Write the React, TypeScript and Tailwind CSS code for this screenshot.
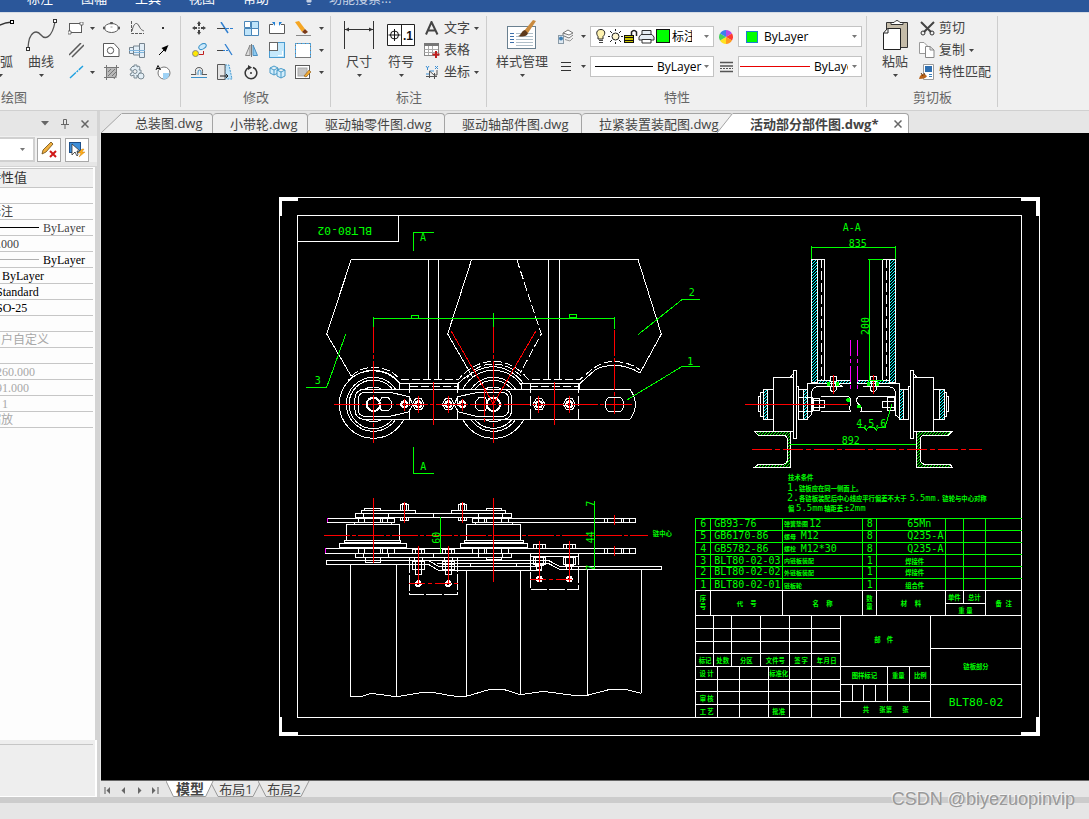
import type { ReactNode } from "react";
import clsx from "clsx";

const menus = [
  { label: "标注", cls: "ml-[27px]" },
  { label: "图幅", cls: "ml-7" },
  { label: "工具", cls: "ml-7" },
  { label: "视图", cls: "ml-7" },
  { label: "帮助", cls: "ml-7" },
];

const docTabs = ["小带轮.dwg", "驱动轴零件图.dwg", "驱动轴部件图.dwg", "拉紧装置装配图.dwg"];

const bom = [
  { no: "6", code: "GB93-76", name: "弹簧垫圈", spec: "12", sx: 358, qty: "8", mat: "65Mn", y: 80 },
  { no: "5", code: "GB6170-86", name: "螺母", spec: "M12", sx: 332, qty: "8", mat: "Q235-A", y: 118 },
  { no: "4", code: "GB5782-86", name: "螺栓", spec: "M12*30", sx: 332, qty: "8", mat: "Q235-A", y: 155 },
  { no: "3", code: "BLT80-02-03", name: "内链板装配", spec: "", sx: 0, qty: "1", mat: "", cn: "焊接件", y: 191 },
  { no: "2", code: "BLT80-02-02", name: "外链板装配", spec: "", sx: 0, qty: "1", mat: "", cn: "焊接件", y: 226 },
  { no: "1", code: "BLT80-02-01", name: "链板轮", spec: "", sx: 0, qty: "1", mat: "", cn: "组合件", y: 265 },
];

const labels: [number, number, string][] = [
  [39, 304, "序"], [39, 326, "号"], [150, 318, "代"], [190, 318, "号"], [377, 318, "名"], [418, 318, "称"],
  [538, 304, "数"], [538, 326, "量"], [642, 318, "材"], [684, 318, "料"], [793, 299, "单件"], [853, 299, "总计"],
  [814, 338, "重"], [838, 338, "量"], [926, 318, "备"], [956, 318, "注"], [562, 427, "部"], [600, 427, "件"],
  [45, 489, "标记"], [98, 489, "处数"], [169, 489, "分区"], [256, 489, "文件号"], [322, 489, "签"], [344, 489, "字"],
  [390, 489, "年"], [410, 489, "月"], [430, 489, "日"], [38, 527, "设"], [61, 527, "计"], [266, 527, "标准化"],
  [39, 602, "审"], [61, 602, "核"], [39, 641, "工"], [61, 641, "艺"], [266, 641, "批准"], [523, 534, "图样标记"],
  [625, 534, "重量"], [691, 534, "比例"], [528, 636, "共"], [587, 636, "张第"], [646, 636, "张"], [858, 506, "链板部分"],
];

function Icon({ w, h, children }: { w: number; h: number; children: ReactNode }) {
  return (
    <svg width={w} height={h} viewBox={`0 0 ${w} ${h}`} fill="none" stroke="#5a5a5a" className="shrink-0" aria-hidden="true">
      {children}
    </svg>
  );
}

function Caret({ faint }: { faint?: boolean }) {
  return (
    <svg width="5" height="3" viewBox="0 0 5 3" className="shrink-0" aria-hidden="true">
      <path d="M0 0H5L2.5 3Z" fill={faint ? "#777" : "#444"} />
    </svg>
  );
}

function Tool({ label, children }: { label: string; children: ReactNode }) {
  return (
    <button aria-label={label} className="flex h-[22px] w-full items-center justify-center">
      {children}
    </button>
  );
}

function BigTool({ label, w, children }: { label: string; w: string; children: ReactNode }) {
  return (
    <button className={clsx("flex shrink-0 flex-col items-center", w)}>
      <span className="flex h-[35px] items-center">{children}</span>
      <span className="h-[18px] whitespace-nowrap text-[13px] leading-[18px]">{label}</span>
      <span className="mt-1 flex">
        <Caret />
      </span>
    </button>
  );
}

function Row({ label, caret, children }: { label: string; caret?: boolean; children: ReactNode }) {
  return (
    <button className="flex h-[22px] items-center">
      <span className="mr-1 flex w-4 justify-center">{children}</span>
      <span className="mr-1 whitespace-nowrap text-[13px]">{label}</span>
      {caret && <Caret />}
    </button>
  );
}

function Group({ title, w, end, children }: { title: string; w: string; end?: boolean; children: ReactNode }) {
  return (
    <section className={clsx("flex shrink-0 flex-col overflow-hidden pt-1", w)}>
      <div className={clsx("flex h-[72px] items-start", end && "justify-end")}>{children}</div>
      <h2 className={clsx("text-[13px] leading-4 text-[#666]", end ? "pl-px" : "text-center")}>{title}</h2>
    </section>
  );
}

function DrawGroup() {
  return (
    <Group title="绘图" w="w-[181px]" end>
      <BigTool label="圆弧" w="w-8">
        <Icon w={32} h={32}>
          <path d="M2 30Q6 4 28 3" stroke="#333" strokeWidth="1.3" />
          <rect x="26.5" y="1.5" width="3" height="3" fill="#fff" stroke="#000" />
        </Icon>
      </BigTool>
      <BigTool label="曲线" w="w-[50px]">
        <Icon w={34} h={34}>
          <path d="M4 30C5 12 13 12 17 17S28 20 31 4" stroke="#555" strokeWidth="1.3" />
          <rect x="2.5" y="29.5" width="3" height="3" fill="#fff" stroke="#333" />
          <rect x="29.5" y="1.5" width="3" height="3" fill="#fff" stroke="#333" />
        </Icon>
      </BigTool>
      <div className="grid shrink-0 grid-cols-[20px_12px_26px_26px_26px] content-start pr-[5px]">
        <Tool label="矩形">
          <Icon w={16} h={13}>
            <rect x="1.5" y="1.5" width="12" height="9" fill="#fff" />
            <path d="M0 9h3v3H0ZM12 0h3v3h-3Z" fill="#fff" strokeWidth=".8" />
          </Icon>
        </Tool>
        <Tool label="矩形选项"><Caret /></Tool>
        <Tool label="椭圆">
          <Icon w={17} h={12}>
            <ellipse cx="8.5" cy="6" rx="7" ry="4.5" fill="#fff" />
            <path d="M0 5h2v2H0ZM15 5h2v2h-2ZM7.5 0h2v2h-2ZM7.5 5h2" fill="#555" strokeWidth=".6" />
          </Icon>
        </Tool>
        <Tool label="公式曲线">
          <Icon w={15} h={14}>
            <path d="M1.5 0V12.5H14" strokeDasharray="3 1" />
            <path d="M2 10C4 1 7 1 9 5S12 9 14 10" />
          </Icon>
        </Tool>
        <Tool label="点">
          <Icon w={4} h={4}><rect x="1" y="1" width="2" height="2" fill="#333" stroke="none" /></Icon>
        </Tool>
        <Tool label="双线">
          <Icon w={15} h={15}><path d="M0 12 12 0M3 14 15 2" strokeWidth="1.5" /></Icon>
        </Tool>
        <span />
        <Tool label="孔轴轮廓">
          <Icon w={17} h={14}>
            <path d="M.5 13.5V.5H11L16 6v7.5Z" fill="#fff" />
            <circle cx="7.5" cy="7.5" r="3.2" />
          </Icon>
        </Tool>
        <Tool label="轴">
          <Icon w={16} h={15}>
            <path d="M.5 4.5h4v6h-4ZM4.500 3h6v9h-6ZM10.500.5h5v14h-5Z" fill="#e2eef7" stroke="#75838e" />
            <path d="M0 7.500H16M5 9.500H15" stroke="#7fb4dc" />
          </Icon>
        </Tool>
        <Tool label="箭头">
          <Icon w={11} h={11}>
            <path d="M1 10 7 4" stroke="#000" />
            <path d="M10.5 0 3.5 3 7.5 7Z" fill="#000" stroke="none" />
          </Icon>
        </Tool>
        <Tool label="中心线">
          <Icon w={15} h={14}><path d="M1 13 14 1" stroke="#1ea0e0" strokeDasharray="8 1 2 1" strokeWidth="1.4" /></Icon>
        </Tool>
        <Tool label="中心线选项"><Caret /></Tool>
        <Tool label="剖面线">
          <Icon w={15} h={15}>
            <path d="M2 2h11v11H2Z" fill="#b8b8b8" stroke="none" />
            <path d="M0 2.5H15M0 12.5H11M2.5 0V15M12.5 0V10L10 14M4 11 11 4M4 7 7 4M8 11 12 7" stroke="#777" />
          </Icon>
        </Tool>
        <Tool label="齿形">
          <Icon w={16} h={16}>
            <path d="M2 4 4 2 5 3V1H8V3L10 2 11 4 10 6H12V9H10L11 11 9 13 8 11V14H5V11L2 12 1 10 3 9V6H1Z" fill="#e3eef5" stroke="#7b8a94" />
            <circle cx="6" cy="7.5" r="2" fill="#f0f0f0" stroke="#7b8a94" />
            <circle cx="12" cy="12" r="3" fill="#e3eef5" stroke="#7b8a94" />
          </Icon>
        </Tool>
        <Tool label="局部放大">
          <Icon w={16} h={15}>
            <circle cx="9" cy="8" r="6" fill="#fff" stroke="#777" />
            <path d="M8 8h6a5 5 0 0 1-6 6Z" fill="#9fd2f5" stroke="none" />
            <path d="M1 5 3 .5 5.5 5M2 3.5H5" stroke="#111" />
          </Icon>
        </Tool>
      </div>
    </Group>
  );
}

function ModifyGroup() {
  return (
    <Group title="修改" w="w-[150px]">
      <div className="grid grid-cols-[26px_26px_26px_26px_26px_10px] content-start pl-[5px]">
        <Tool label="移动">
          <Icon w={14} h={14}>
            <path d="M7 0 9 3H8V5H6V3H5ZM7 14 5 11H6V9H8V11H9ZM0 7 3 5V6H5V8H3V9ZM14 7 11 9V8H9V6H11V5Z" fill="#444" stroke="none" />
            <rect x="6" y="6" width="2" height="2" fill="#888" stroke="none" />
          </Icon>
        </Tool>
        <Tool label="裁剪">
          <Icon w={16} h={12}>
            <path d="M4 0 11 11" stroke="#2f7fd0" strokeWidth="1.5" />
            <path d="M0 6.5H8" stroke="#444" />
            <path d="M9 6.5H16" stroke="#2f7fd0" strokeDasharray="3 1" />
          </Icon>
        </Tool>
        <Tool label="阵列">
          <Icon w={15} h={15}>
            <path d="M.5.5h6v6h-6ZM7.500 7.500h7v7h-7Z" fill="#fff" stroke="#4a86b8" />
            <path d="M7.500.5h7v7h-7ZM.5 7.500h7v7h-7Z" fill="#bfe4fa" stroke="#4a86b8" />
          </Icon>
        </Tool>
        <Tool label="打断">
          <Icon w={16} h={13}>
            <path d="M4 2.5H.5v9h15v-9H12" fill="#fff" />
            <path d="M3 0h3v4ZM10 4V0h3Z" fill="#1f7fd6" stroke="none" />
          </Icon>
        </Tool>
        <Tool label="删除">
          <Icon w={16} h={15}>
            <path d="M0 1 4 0 10 8 7 11Z" fill="#f5a623" stroke="none" />
            <path d="M7 11 10 8 13 11 10 13Z" fill="#7a3a1a" stroke="none" />
            <path d="M1 14.5H16" stroke="#888" />
          </Icon>
        </Tool>
        <Tool label="删除选项"><Caret /></Tool>
        <Tool label="平移复制">
          <Icon w={15} h={15}>
            <ellipse cx="10.5" cy="3.5" rx="4" ry="2.5" fill="#cdeafb" stroke="#3d93c9" transform="rotate(-30 10.5 3.5)" />
            <circle cx="3.5" cy="10.5" r="3" fill="#ffe800" stroke="#888" />
            <path d="M7 11.5H11.5V8" stroke="#c02020" />
          </Icon>
        </Tool>
        <Tool label="延伸">
          <Icon w={16} h={12}>
            <path d="M8 0 15 11" stroke="#2f7fd0" strokeWidth="1.3" />
            <path d="M0 6.5H6" stroke="#444" />
            <path d="M6 6.5H11" stroke="#2f7fd0" strokeDasharray="2 1" />
          </Icon>
        </Tool>
        <Tool label="镜像">
          <Icon w={13} h={13}>
            <path d="M5 1V11.5H.5Z" fill="#ddd" stroke="#888" />
            <path d="M8 1V11.5H12.5Z" fill="#8fcaf0" stroke="#4a8fc0" />
            <path d="M6.5 0V13" stroke="#777" />
          </Icon>
        </Tool>
        <Tool label="缩放">
          <Icon w={16} h={16}>
            <rect x=".5" y=".5" width="15" height="15" fill="#c5e8fb" stroke="#4a9bd0" />
            <rect x=".5" y=".5" width="8" height="8" fill="#fff" stroke="#666" />
            <path d="M9 13.5H13.5V9" stroke="#fff" />
          </Icon>
        </Tool>
        <Tool label="拉伸">
          <Icon w={16} h={15}>
            <rect x=".5" y=".5" width="15" height="14" fill="#fff" stroke="#777" />
            <path d="M.5 14V.5H15.500V14" stroke="#55a8e0" strokeDasharray="3 1" />
          </Icon>
        </Tool>
        <Tool label="拉伸选项"><Caret /></Tool>
        <Tool label="等距线">
          <Icon w={16} h={13}>
            <path d="M0 8.5H5Q3 1.5 8 1.5T11 8.5H16" />
            <path d="M0 11.5H16M7 9V6Q7 4 8.5 4T10 6V9" stroke="#3c8fc8" />
          </Icon>
        </Tool>
        <Tool label="旋转拉伸">
          <Icon w={16} h={16}>
            <path d="M8 1H12L15 15H8Z" fill="#bfe4fa" stroke="#4a9bd0" strokeDasharray="2 1" />
            <path d="M.5.5H8V15.5H.5Z" fill="#e4e4e4" />
            <path d="M3 12H11M9 10 11 12 9 14" stroke="#222" />
          </Icon>
        </Tool>
        <Tool label="旋转">
          <Icon w={14} h={15}>
            <path d="M5 2.5A5.8 5.8 0 1 0 9 2.5" stroke="#333" strokeWidth="1.5" />
            <path d="M4 0 8 2.5 4 5Z" fill="#333" stroke="none" />
            <circle cx="7" cy="8" r="1" fill="#333" stroke="none" />
          </Icon>
        </Tool>
        <Tool label="分解">
          <Icon w={17} h={14}>
            <path d="M1 3 5 1 9 3V8L5 10 1 8ZM1 3 5 5 9 3M5 5V10" fill="#d4eefc" stroke="#4a9bc8" />
            <path d="M8 5 12 3.5 16 5V11L12 13 8 11ZM8 5 12 7 16 5M12 7V13" fill="#d4eefc" stroke="#4a9bc8" />
          </Icon>
        </Tool>
        <Tool label="填充编辑">
          <Icon w={16} h={15}>
            <rect x=".5" y=".5" width="14" height="13" fill="#fff" />
            <rect x="3" y="3" width="9" height="8" fill="#c4c4c4" stroke="#aaa" />
            <path d="M9 11 14 5 16 7 11 12Z" fill="#f0a830" stroke="#8a5a1a" strokeWidth=".6" />
          </Icon>
        </Tool>
        <Tool label="填充编辑选项"><Caret /></Tool>
      </div>
    </Group>
  );
}

function AnnotateGroup() {
  return (
    <Group title="标注" w="w-[156px]">
      <BigTool label="尺寸" w="w-12 ml-1">
        <Icon w={30} h={30}>
          <path d="M.5 1V29M29.5 1V29M1 9.5H29" stroke="#333" />
          <path d="M1 9.5 5 7.5V11.5ZM29 9.5 25 7.5V11.5Z" fill="#333" stroke="none" />
        </Icon>
      </BigTool>
      <BigTool label="符号" w="w-9">
        <Icon w={28} h={24}>
          <path d="M.5 1.5H27.5V22.5H.5ZM14.5 1.5V22.5" fill="#fff" stroke="#222" />
          <circle cx="7.5" cy="12" r="4" stroke="#111" />
          <path d="M1.5 12H13.5M7.5 6V18" stroke="#111" />
          <text x="16" y="17" fontSize="12" fontWeight="bold" fill="#111" stroke="none" fontFamily="Liberation Sans, sans-serif">.1</text>
        </Icon>
      </BigTool>
      <div className="ml-1 flex flex-col pl-px">
        <Row label="文字" caret>
          <Icon w={14} h={14}><path d="M1 13.5 6.5 1 12.5 13.5M3 9.5H11" stroke="#444" strokeWidth="2" /></Icon>
        </Row>
        <Row label="表格">
          <Icon w={16} h={16}>
            <rect x=".5" y="1.5" width="14" height="12" fill="#fff" stroke="#888" />
            <path d="M0 1H15V4H0Z" fill="#777" stroke="none" />
            <path d="M.5 7.5H14M.5 10.5H14M4.5 4V13M8.5 4V13" stroke="#aaa" />
            <path d="M12 9V16M8.5 12.5H15.5" stroke="#c02020" strokeWidth="2" />
          </Icon>
        </Row>
        <Row label="坐标" caret>
          <Icon w={14} h={14}>
            <path d="M1 1 2.5 3 4 1M2.5 3V5M10 1 13 4M13 1 10 4M5 6H9M1 9H5" stroke="#3b8fd4" />
            <path d="M4.5 13V6L9 10H12V5M1 11.5H12M9.5 8V14" stroke="#555" />
          </Icon>
        </Row>
      </div>
    </Group>
  );
}

const comboBox = "flex h-[21px] min-w-0 items-center border border-[#c3c3c3] bg-white text-[12px] text-black";
const comboSelect = "h-full min-w-0 appearance-none overflow-hidden bg-transparent outline-none";

function PropertyGroup() {
  return (
    <Group title="特性" w="w-[380px]">
      <BigTool label="样式管理" w="w-[66px] ml-[2px]">
        <Icon w={32} h={32}>
          <rect x="1.5" y="7.5" width="28" height="22" fill="#fff" stroke="#6a8090" />
          <path d="M4 14.5H8M4 17.5H8M4 20.5H8M4 23.5H8" stroke="#3c6ea8" />
          <path d="M10 14.5H27M10 17.5H27M10 20.5H27M10 23.5H27M10 26.5H27" stroke="#b0bfc9" />
          <path d="M18 12 27 1 30 2 22 14Z" fill="#c98a3e" stroke="none" />
          <path d="M12 17C15 17 15 12 19 11L22 14C21 18 16 18 12 17Z" fill="#5e3a1c" stroke="none" />
        </Icon>
      </BigTool>
      <div className="grid grid-cols-[22px_13px_124px_24px_124px] content-start items-center gap-y-[9px] pt-[9px]">
        <button aria-label="图层" className="flex justify-center">
          <Icon w={16} h={15}>
            <path d="M5 4 10 1 15 4 11 6ZM5 7V4M6 7 11 9 15 6" fill="#fff" stroke="#777" />
            <rect x=".5" y="6.5" width="5" height="8" fill="#dfe9f2" stroke="#8a9aa6" />
            <circle cx="3" cy="9.5" r="2" fill="#3d7fb4" stroke="none" />
            <path d="M7 10.500 12 12 15 9" stroke="#999" />
          </Icon>
        </button>
        <button aria-label="图层选项" className="flex justify-center"><Caret /></button>
        <div className={clsx(comboBox, "pl-1 pr-1")}>
          <Icon w={12} h={17}>
            <path d="M6 1.5C1 1.5 1 6 3 8.5V11H8V8.5C11 6 10 1.5 6 1.5Z" fill="#fff3b0" stroke="#222" />
            <path d="M4 12.5H8M4 14.5H8" stroke="#444" />
          </Icon>
          <Icon w={17} h={17}>
            <circle cx="8.5" cy="8.5" r="3.5" fill="#fff7d0" stroke="#222" />
            <path d="M8.5 1V3M8.5 14V16M1 8.5H3M14 8.5H16M3 3 5 5M12 12 14 14M3 14 5 12M12 5 14 3" stroke="#222" />
          </Icon>
          <Icon w={14} h={15}>
            <path d="M7.5 7V3Q10 0 12.500 3V7" stroke="#222" strokeWidth="1.5" />
            <rect x=".5" y="6.5" width="9" height="7" fill="#c9c400" stroke="#111" />
            <path d="M1 8.5H9M1 11.5H9" stroke="#111" />
          </Icon>
          <Icon w={17} h={15}>
            <path d="M4 5V1.5H13V5M3 5.5H14L16 8V11H1V8Z" fill="#e6ecf2" stroke="#333" />
            <path d="M4 10.5H13V14H4Z" fill="#fff" stroke="#333" />
          </Icon>
          <Icon w={17} h={15}><rect x="1.5" y=".5" width="13" height="13" fill="#0f0" stroke="#111" /></Icon>
          <select aria-label="当前图层" className={clsx(comboSelect, "w-5")}><option>标注</option></select>
          <span className="ml-auto flex"><Caret faint /></span>
        </div>
        <button aria-label="颜色" className="flex justify-center">
          <Icon w={14} h={14}>
            <g stroke="none">
              <path d="M7 7V0A7 7 0 0 1 13 3.5Z" fill="#b44be8" />
              <path d="M7 7 13 3.5A7 7 0 0 1 13 10.5Z" fill="#ff3b30" />
              <path d="M7 7 13 10.5A7 7 0 0 1 7 14Z" fill="#ff9a1f" />
              <path d="M7 7V14A7 7 0 0 1 1 10.5Z" fill="#ffe21f" />
              <path d="M7 7 1 10.5A7 7 0 0 1 1 3.5Z" fill="#45d15a" />
              <path d="M7 7 1 3.5A7 7 0 0 1 7 0Z" fill="#3a7ff0" />
            </g>
          </Icon>
        </button>
        <div className={clsx(comboBox, "pl-[7px] pr-1")}>
          <span className="mr-[6px] h-3 w-3 shrink-0 border border-[#1e7fd0] bg-[#00ff00]" />
          <select aria-label="当前颜色" className={clsx(comboSelect, "flex-1")}><option>ByLayer</option></select>
          <Caret faint />
        </div>
        <button aria-label="线型" className="flex justify-center">
          <Icon w={10} h={9}><path d="M0 .5H10M0 4.5H10M0 8.5H10" stroke="#333" /></Icon>
        </button>
        <button aria-label="线型选项" className="flex justify-center"><Caret /></button>
        <div className={clsx(comboBox, "pl-1 pr-1")}>
          <span className="mr-1 h-px min-w-0 flex-1 bg-black" />
          <select aria-label="当前线型" className={clsx(comboSelect, "w-[47px]")}><option>ByLayer</option></select>
          <Caret faint />
        </div>
        <button aria-label="线宽" className="flex justify-center">
          <Icon w={13} h={12}><path d="M0 1.5H13M0 5H13M0 10.5H13" stroke="#555" strokeWidth="1.5" /><path d="M0 7.5H13" stroke="#555" strokeDasharray="2 1" /></Icon>
        </button>
        <div className={clsx(comboBox, "pl-px pr-1")}>
          <span className="mr-1 h-px w-[70px] shrink-0 bg-[#e80000]" />
          <select aria-label="当前线宽" className={clsx(comboSelect, "w-[34px]")}><option>ByLayer</option></select>
          <span className="ml-auto flex"><Caret faint /></span>
        </div>
      </div>
    </Group>
  );
}

function ClipboardGroup() {
  return (
    <Group title="剪切板" w="w-[131px]">
      <BigTool label="粘贴" w="w-11 ml-[6px]">
        <Icon w={27} h={32}>
          <path d="M4.5 3.5H25.5V28.5H4.5Z" fill="#c4bba8" stroke="#333" />
          <path d="M9 5.5V3.5H12Q15-.5 18 3.5H21V5.5Z" fill="#fff" stroke="#333" />
          <path d="M5.5 9.5H18.5V30.5H1.5V14Z" fill="#fff" stroke="#222" />
          <path d="M1.5 14H6V9.5" stroke="#222" />
        </Icon>
      </BigTool>
      <div className="ml-[2px] flex flex-col">
        <Row label="剪切">
          <Icon w={15} h={15}>
            <path d="M1 1 11 11M14 1 4 11" stroke="#444" strokeWidth="2" />
            <circle cx="3" cy="12" r="2" stroke="#333" /><circle cx="12" cy="12" r="2" stroke="#333" />
          </Icon>
        </Row>
        <Row label="复制" caret>
          <Icon w={16} h={16}>
            <path d="M.5.5H5L8.5 4V11.5H.5Z" fill="#fff" stroke="#999" />
            <path d="M6.5 4.5H11L15 8V15.5H6.5ZM11 4.5V8H15" fill="#fff" stroke="#888" />
          </Icon>
        </Row>
        <Row label="特性匹配">
          <Icon w={16} h={16}>
            <path d="M4.5.5H14.5V15.5H4.5Z" fill="#fff" stroke="#999" />
            <rect x="6" y="2" width="7" height="6" fill="#2f6fb0" stroke="none" />
            <path d="M10 10.5H13M10 12.5H13" stroke="#3c7fb8" />
            <path d="M0 15Q1 10 5 10L8 12Q7 15 0 15Z" fill="#b8621a" stroke="none" />
            <path d="M2 9 4 12M5 9 6 11" stroke="#6b3a10" />
          </Icon>
        </Row>
      </div>
    </Group>
  );
}

function Ribbon() {
  const bar = <div className="-ml-px my-[3px] w-px shrink-0 bg-[#cdcdcd]" />;
  return (
    <div className="flex h-[98px] overflow-hidden border-b border-[#d0d0d0] bg-[#f0f0f0] text-[#444]">
      <DrawGroup />{bar}
      <ModifyGroup />{bar}
      <AnnotateGroup />{bar}
      <PropertyGroup />{bar}
      <ClipboardGroup />{bar}
    </div>
  );
}

function PropRow({ shift, tone, line, children }: { shift?: string; tone?: string; line?: string; children?: ReactNode }) {
  return (
    <tr className="border-b border-[#c6c6c6]">
      <td className="h-4 p-0">
        <div className={clsx("flex h-[15px] items-center whitespace-nowrap leading-[14px]", shift, tone)}>
          {line && <span className={clsx("mr-1 h-px", line)} />}
          {children}
        </div>
      </td>
    </tr>
  );
}

function Side() {
  return (
    <aside className="flex w-[101px] shrink-0 overflow-hidden bg-[#e6e6e6]">
      <div className="flex w-[97px] shrink-0 flex-col">
        <div className="flex h-[25px] items-center justify-end gap-3 pr-2">
          <button aria-label="菜单"><Icon w={8} h={5}><path d="M0 0H8L4 4.5Z" fill="#666" stroke="none" /></Icon></button>
          <button aria-label="固定"><Icon w={8} h={10}><path d="M2.5.5H5.5V5.5H2.5ZM0 5.5H8M4 6V10" stroke="#666" /></Icon></button>
          <button aria-label="关闭"><Icon w={8} h={8}><path d="M.5.5 7.5 7.5M7.5.5.5 7.5" stroke="#666" strokeWidth="1.5" /></Icon></button>
        </div>
        <div className="flex items-center bg-[#f0f0f0] pt-px">
          <div className="flex h-[25px] w-[35px] items-center justify-end border-2 border-l-0 border-[#d0d0d0] bg-white pr-2">
            <select aria-label="选择对象" className="h-full w-0 appearance-none"><option></option></select>
            <Caret faint />
          </div>
          <button aria-label="清除选择" className="ml-[2px] flex h-6 w-6 items-center justify-center border border-[#a8a8a8] bg-white">
            <Icon w={17} h={16}>
              <path d="M1 12 2 8 10 0 12 2 5 10Z" fill="#f0b040" stroke="#6b4a10" strokeWidth=".8" />
              <path d="M9 9 15 15M15 9 9 15" stroke="#d01818" strokeWidth="2" />
            </Icon>
          </button>
          <button aria-label="快速选择" className="ml-1 flex h-6 w-6 items-center justify-center border border-[#a8a8a8] bg-white">
            <Icon w={18} h={17}>
              <rect x="1.5" y="1.5" width="11" height="10" fill="#3f8fd8" stroke="#1d4f88" />
              <path d="M4 3V14L7 11 9 15 10 14 9 10H12Z" fill="#fff" stroke="#333" strokeWidth=".8" />
              <path d="M14 8 10 12H13L11 16 17 11H14L16 8Z" fill="#ffae1a" stroke="#c07000" strokeWidth=".4" />
            </Icon>
          </button>
        </div>
        <div className="mt-1 flex flex-1 flex-col border-r-2 border-t border-[#d4d4d4] bg-[#fdfdfd] font-[family-name:'Liberation_Serif','Noto_Sans_CJK_SC',serif] text-[12px]">
          <table className="mt-px w-[93px] table-fixed border-collapse">
            <tbody>
              <tr className="border-b border-t border-[#c6c6c6] bg-[#f0f0f0]">
                <td className="h-[19px] p-0"><div className="-ml-3 whitespace-nowrap text-[13px] leading-[18px] text-[#333]">特性值</div></td>
              </tr>
              <PropRow />
              <PropRow shift="-ml-[11px]" tone="text-[#444]">标注</PropRow>
              <PropRow line="w-[39px] bg-black" tone="text-[#444]">ByLayer</PropRow>
              <PropRow shift="-ml-2" tone="text-[#444]">1.000</PropRow>
              <PropRow line="w-[39px] bg-[#b0b0b0]" tone="text-black">ByLayer</PropRow>
              <PropRow shift="ml-[2px]" tone="text-black">ByLayer</PropRow>
              <PropRow shift="-ml-1" tone="text-black">Standard</PropRow>
              <PropRow shift="-ml-2" tone="text-black">ISO-25</PropRow>
              <PropRow />
              <PropRow shift="-ml-[11px]" tone="text-[#a8a8a8]">用户自定义</PropRow>
              <PropRow />
              <PropRow shift="-ml-1" tone="text-[#a8a8a8]">260.000</PropRow>
              <PropRow shift="-ml-1" tone="text-[#a8a8a8]">91.000</PropRow>
              <PropRow shift="ml-[2px]" tone="text-[#a8a8a8]">1</PropRow>
              <PropRow shift="-ml-[11px]" tone="text-[#a8a8a8]">缩放</PropRow>
            </tbody>
          </table>
        </div>
        <div className="h-[57px] border-b border-r-2 border-white bg-[#eee] pt-1"><div className="w-[93px] border-t border-[#c6c6c6]" /></div>
      </div>
      <div className="w-[3px] shrink-0 bg-[#d4d4d4]" />
    </aside>
  );
}

function DocTabs() {
  return (
    <nav className="flex h-[22px] items-end bg-[#e6e6e6] text-[13px] leading-[18px] text-[#444]">
      <button className="flex h-5 items-stretch">
        <svg width="21" height="20" viewBox="0 0 21 20" aria-hidden="true"><path d="M0 20 20.5.5H21V20Z" fill="#f0f0f0" /><path d="M0 20 20.5.5" stroke="#a4a4a4" /></svg>
        <span className="block w-[91px] rounded-tr border-r border-t border-[#a4a4a4] bg-[#f0f0f0] pl-[13px] text-left">总装图.dwg</span>
      </button>
      {docTabs.map((t, i) => (
        <button
          key={t}
          className={clsx(
            "h-5 whitespace-nowrap border-t border-[#a4a4a4] bg-[#f0f0f0] pl-[17px] text-left leading-[18px]",
            i < 3 ? "rounded-t border-r" : "rounded-t",
            i === 0 && "w-[95px]",
            (i === 1 || i === 2) && "w-[137px]",
            i === 3 && "-mr-4 w-[151px]",
          )}
        >
          {t}
        </button>
      ))}
      <div className="relative flex h-5 items-stretch">
        <svg width="16" height="20" viewBox="0 0 16 20" aria-hidden="true"><path d="M0 20 15.5.5H16V20Z" fill="#fff" /><path d="M0 20 15.5.5" stroke="#a4a4a4" /></svg>
        <div className="flex items-center rounded-tr border-r border-t border-[#a4a4a4] bg-white pl-[17px] pr-[6px]">
          <button className="whitespace-nowrap font-bold leading-[18px]">活动部分部件图.dwg*</button>
          <button aria-label="关闭标签" className="ml-[15px]"><Icon w={8} h={8}><path d="M.5.5 7.5 7.5M7.5.5.5 7.5" stroke="#666" strokeWidth="1.5" /></Icon></button>
        </div>
      </div>
    </nav>
  );
}

const green = "#00ff00";
const latin = "'DejaVu Sans Mono', monospace";
const cjk = "'Noto Sans CJK SC', sans-serif";

/* Tiny CJK annotation, three drawing units to the pixel. */
function Cn({ x, y, children }: { x: number; y: number; children: ReactNode }) {
  return <text x={x} y={y} fontSize="19" fontWeight="bold" fontFamily={cjk} textAnchor="middle">{children}</text>;
}

function Elevation() {
  return (
    <g transform="translate(310 210) scale(.33333)">
      <g stroke="#fff">
        <path d="M124 499 50 372 124 148H984L1054 372 990 489M355 148V508M385 148V508M715 148V508M748 148V508M485 148 413 372 487 500" />
        <path d="M620 148 694 372 630 490" strokeDasharray="9 3" />
        <circle cx="190" cy="583" r="102" /><circle cx="190" cy="583" r="81" /><circle cx="190" cy="583" r="73" /><circle cx="190" cy="583" r="52" />
        <circle cx="550" cy="583" r="102" /><circle cx="550" cy="583" r="81" /><circle cx="550" cy="583" r="72" /><circle cx="550" cy="583" r="52" />
        <path d="M268 520H445V538H268ZM636 520H810V538H636Z" fill="#000" />
        <path d="M124 499Q150 473 190 472 235 473 262 500L272 508H446Q490 455 553 454 610 455 655 508H810L850 475Q880 454 913 454 960 457 990 480M300 529H443M661 529H805M470 505Q500 462 550 462 600 462 640 505" strokeDasharray="8 3" />
        <path d="M115 510Q150 482 190 482 240 484 268 520H445Q495 472 550 470 602 472 640 520H810L855 480Q880 466 913 466 955 467 990 489" />
        <path d="M160 538H960Q976 560 976 583 976 608 960 628H160Q135 624 135 600V565Q137 540 160 538Z" fill="#000" />
        <path d="M145 570Q145 547 165 547H240L298 560 308 583 298 605 240 619H165Q145 619 145 597ZM596 570Q596 547 575 547H505L443 560 433 583 443 605 500 619H575Q596 619 596 597ZM578 538Q605 540 605 565V600Q603 628 578 628" />
        <path d="M298 520V628M443 520V628M661 520V628M805 520V628" strokeDasharray="10 3" />
        <circle cx="190" cy="583" r="20" strokeWidth="2" /><circle cx="550" cy="583" r="20" strokeWidth="2" />
        <path d="M215 563H235L244 575V592L235 603H215L206 583ZM526 563H507L497 575V592L507 603H526L534 583ZM895 562H932L941 575V592L932 605H895L886 592V575Z" />
        {[325, 415, 687, 778].map((x) => (
          <g key={x} transform={`translate(${x} 583)`}>
            <path d="M-9-16H9L18 0 9 16H-9L-18 0Z" /><circle r="9" strokeWidth="2" />
          </g>
        ))}
        <circle cx="283" cy="583" r="9" strokeWidth="2" /><circle cx="457" cy="583" r="9" strokeWidth="2" />
      </g>
      <g stroke="#f00">
        <path d="M190 352V698M550 352V698M913 360V613M72 583H970M523 540V635" strokeDasharray="26 2 4 2" />
        <path d="M370 517V644M733 517V644M325 558V608M415 558V608M687 558V608M778 558V608M283 566V602M457 566V602M424 364 550 582 677 364" />
      </g>
      <path
        stroke={green}
        d="M190 325H913M190 321V352M550 309V352M913 321V358M304 316H326V325M304 316V325M778 313H800V324H778ZM1170 268H1117L984 374M1170 469H1117L952 569M-12 532H50L107 373M310 122V67H372"
      />
      <g fill={green} stroke="none" fontFamily={latin} fontSize="30">
        <text x="1136" y="258">2</text><text x="1132" y="466">1</text><text x="14" y="523">3</text>
        <text x="330" y="94">A</text>
        <text transform="translate(186 51) rotate(180)" fontSize="34">BLT80-02</text>
      </g>
    </g>
  );
}

function Plan() {
  return (
    <g transform="translate(310 440) scale(.33333)">
      <g stroke="#fff">
        <path d="M121 373V768M259 373V768M469 391V768M631 391V763M832 388V765M994 388V760" />
        <path d="M121 769H157L184 760 250 769H268L340 757H365L430 768 469 769 540 748H580L631 764 700 754 790 766H832L900 748H945L994 760" />
        <path d="M52 235H255V247H52ZM487 235H977V247H487ZM136 220H605V232H136ZM154 213H317V220H154ZM424 213H587V220H424ZM165 205H212V213H165ZM529 205H576V213H529Z" />
        <path d="M133 247H245V253H133ZM109 253H270V302H109ZM105 302H273V309H105ZM88 310H290V322H88ZM496 247H608V253H496ZM469 253H632V302H469ZM464 302H640V309H464ZM451 310H653V322H451Z" />
        <path d="M46 325H977V340H46ZM136 340H605V352H136ZM166 352H212V367H166ZM529 352H575V360H529Z" />
        <path d="M355 361H50V373H355L385 391H695M340 361H355L385 379H690M355 361H715L748 379H1054V388H748L715 370H380M481 370V379M619 370V379" />
        <path d="M145 235V247M165 235V247M211 235V247M217 235V247M233 235V247M505 235V247M523 235V247M530 235V247M574 235V247M595 235V247M160 220V232M235 220V232M370 220V232M505 220V232M577 220V232M885 235V247M892 235V247M934 235V247M940 235V247M958 235V247" />
        <path d="M145 325V340M165 325V340M211 325V340M217 325V340M233 325V340M253 325V340M487 325V340M505 325V340M523 325V340M530 325V340M574 325V340M595 325V340M885 325V340M892 325V340M934 325V340M940 325V340M958 325V340M160 340V352M235 340V352M370 340V352M505 340V352M577 340V352" />
        <path d="M298 352V463H443V352M661 342V448H805V342" strokeDasharray="16 2" />
        <path d="M661 349H805M661 342V360M805 342V360" />
        {[283, 457].map((x) => (
          <g key={x} transform={`translate(${x} 0)`}>
            <path d="M-12 195H12V211H-12ZM-7 191H7M-12 232H12V241H-12ZM-6 195V211M6 195V211M-6 232V241M6 232V241M-16 213H16" />
          </g>
        ))}
        {[325, 415].map((x) => (
          <g key={x} transform={`translate(${x} 0)`}>
            <path d="M-18 328H18V340H-18ZM-9 328V340M9 328V340M-18 364H18V388H-18ZM-18 374H18M-9 364V403H9V364M-12 352V364M12 352V364" />
            <circle cy="431" r="7" strokeWidth="2" />
          </g>
        ))}
        {[688, 778].map((x) => (
          <g key={x} transform={`translate(${x} 0)`}>
            <path d="M-18 313H18V325H-18ZM-9 313V325M9 313V325M-18 352H18V374H-18ZM-12 352V378H12V352M-8 378V389H8V378" />
            <circle cy="417" r="7" strokeWidth="2" />
          </g>
        ))}
      </g>
      <g stroke="#f00">
        <path d="M42 286H1015" strokeDasharray="26 2 4 2" />
        <path d="M190 174V368M550 174V426M283 186V248M457 186V248M325 318V430M415 318V430M688 303V425M778 303V425M913 225V255M913 318V348" />
        <path d="M298 430H443M661 418H792" strokeDasharray="16 3 4 3" />
      </g>
      <path d="M52 235V247M46 325V340" stroke="#f0f" />
      <path d="M310 20V100H372M391 232V340M853 183V388" stroke={green} />
      <g fill={green} stroke="none" fontFamily={latin} fontSize="30">
        <text x="331" y="90">A</text>
        <text transform="translate(389 311) rotate(-90)">60</text>
        <text transform="translate(852 200) rotate(-90)">7</text>
        <text transform="translate(852 310) rotate(-90)">44</text>
        <text transform="translate(852 392) rotate(-90)">7</text>
        <Cn x={1057} y={288}>链中心</Cn>
      </g>
    </g>
  );
}

function Section() {
  return (
    <g transform="translate(735 215) scale(.33333)">
      <g stroke="#fff">
        <path d="M229 133H269V496H247M481 133H442V496H463" />
        <path d="M229 133H247V503H229ZM463 133H481V503H463ZM247 496H346V505H247ZM369 496H463V505H369Z" fill="url(#hatchCyan)" />
        <path d="M259 133V496M454 133V496" strokeDasharray="9 3" />
        <path d="M346 505H217V610L229 600V540Q229 515 250 515H325M369 505H494V610L482 600V540Q482 515 460 515H385M250 515H325L310 508M385 515H400" />
        <path d="M259 544H340Q352 555 346 567 342 580 346 589H259M442 589H378Q385 580 370 567 360 555 370 544H482" />
        <path d="M190 523H217V613H190ZM191 549H232V589H191ZM232 556H268V577H232ZM235 550H254V588H235ZM494 523H521V613H494ZM458 549H480V588H458ZM442 559H482V577H442ZM506 532V604" />
        <path d="M115 487H175V649H115ZM175 466H185V671H175ZM166 487 175 475M97 523H115V613H97ZM78 532H85V604H78ZM70 544H78V589H70ZM185 515H190V613" />
        <path d="M536 487H596V649H536ZM526 466H536V671H526ZM545 487 536 475M596 523H613V613H596ZM628 532H635V604H628ZM635 544H641V589H635ZM526 515H521V613" />
        <path d="M85 523H97V613H85ZM205 523H217V613H205ZM494 523H506V613H494ZM613 523H628V613H613Z" fill="url(#hatchCyan)" />
        <path d="M58 649H166V757H58L70 748H145Q157 745 157 735V675Q157 661 145 661H70ZM652 649H544V757H652L645 748H568Q556 745 556 735V675Q556 661 568 661H640Z" fill="url(#hatchGreen)" />
        {[295, 415].map((x) => (
          <g key={x} transform={`translate(${x} 0)`}>
            <path d="M-9 486H9V500H-9ZM-6 500V515M6 500V515M-9 515H9V524L4 529H-4L-9 524Z" fill="#000" />
            <path d="M-13 502V512M13 502V512" stroke={green} strokeWidth="3" />
          </g>
        ))}
      </g>
      <path d="M346 375V525M367 375V525" stroke="#f0f" strokeDasharray="16 3 4 3" />
      <path d="M30 568H340M295 480V538M415 480V538" stroke="#f00" />
      <path d="M51 703H741" stroke="#f00" strokeDasharray="20 3 5 3" />
      <path d="M229 97H481M229 93V133M481 93V133M403 133V495M399 133H445M399 496H445M166 688H544M370 638H388L394 645 400 638H418L424 645 430 638H450L470 568" stroke={green} />
      <g fill={green} stroke="none">
        <circle cx="340" cy="555" r="6" /><circle cx="372" cy="575" r="6" />
      </g>
      <g fill={green} stroke="none" fontFamily={latin} fontSize="30">
        <text x="323" y="47">A-A</text>
        <text x="341" y="95">835</text>
        <text transform="translate(402 360) rotate(-90)">200</text>
        <text x="320" y="686">892</text>
        <text x="364" y="636">4,5,6</text>
        <text x="159" y="796" fontSize="19" fontWeight="bold" fontFamily={cjk}>技术条件</text>
        <text x="156" y="827">1.<tspan fontSize="19" fontWeight="bold" fontFamily={cjk}>链板应在同一侧面上。</tspan></text>
        <text x="156" y="857">2.<tspan fontSize="19" fontWeight="bold" fontFamily={cjk}>各链板装配后中心线应平行偏差不大于</tspan></text>
        <text x="524" y="857" fontSize="26">5.5mm.</text>
        <text x="622" y="857" fontSize="19" fontWeight="bold" fontFamily={cjk}>链轮与中心对称</text>
        <text x="159" y="887" fontSize="19" fontWeight="bold" fontFamily={cjk}>偏</text>
        <text x="183" y="887" fontSize="27">5.5mm</text>
        <text x="267" y="887" fontSize="19" fontWeight="bold" fontFamily={cjk}>轴距差</text>
        <text x="327" y="887" fontSize="27">±2mm</text>
      </g>
    </g>
  );
}

function TitleBlock() {
  return (
    <g transform="translate(690 500) scale(.33333)">
      <path d="M16 55H995M16 91H995M16 127H995M16 163H995M16 199H995M16 235H995M16 55V271M61 55V271M277 55V271M517 55V271M559 55V271M766 55V271M820 55V271M886 55V271" stroke={green} />
      <path
        stroke="#fff"
        d="M16 271H995M16 346H995M766 310H886M16 271V652M61 271V346M277 271V346M517 271V346M559 271V346M766 271V346M820 271V310M886 271V346M16 385H451M16 424H451M16 460H451M16 499H451M16 538H451M16 574H451M16 613H451M70 346V499M124 346V499M211 346V499M298 346V652M364 346V652M82 499V652M148 499V652M235 499V652M451 346V652M451 499H721M451 553H721M451 604H721M592 499V604M658 499V604M487 553V604M520 553V604M556 553V604M721 346V652M721 445H995M721 553H995"
      />
      <g fill={green} stroke="none" fontFamily={latin} fontSize="30">
        {bom.map((r) => (
          <g key={r.no}>
            <text x="31" y={r.y}>{r.no}</text>
            <text x="73" y={r.y}>{r.code}</text>
            <text x="282" y={r.y - 2} fontSize="18" fontWeight="bold" fontFamily={cjk}>{r.name}</text>
            {r.spec && <text x={r.sx} y={r.y}>{r.spec}</text>}
            <text x="530" y={r.y}>{r.qty}</text>
            {r.mat ? <text x="652" y={r.y}>{r.mat}</text> : <Cn x={674} y={r.y}>{r.cn}</Cn>}
          </g>
        ))}
        {labels.map(([x, y, t]) => <Cn key={`${x}-${y}`} x={x} y={y}>{t}</Cn>)}
        <text x="776" y="618" fontSize="34">BLT80-02</text>
      </g>
    </g>
  );
}

function Canvas() {
  return (
    <svg viewBox="101 133 988 647" className="block w-full bg-black" fill="none" strokeWidth="1" shapeRendering="crispEdges" role="img" aria-label="活动部分部件图">
      <style>{"path,circle{vector-effect:non-scaling-stroke}"}</style>
      <defs>
        <pattern id="hatchCyan" width="9" height="9" patternUnits="userSpaceOnUse">
          <path d="M0 9 9 0M-2 2 2-2M7 11 11 7" stroke="#00ffff" strokeWidth="1" />
        </pattern>
        <pattern id="hatchGreen" width="9" height="9" patternUnits="userSpaceOnUse">
          <path d="M0 9 9 0M-2 2 2-2M7 11 11 7" stroke="#00ff00" strokeWidth="1" />
        </pattern>
      </defs>
      <g stroke="#fff">
        <path d="M279.5 197.5H1039.5V735.5H279.5ZM297.5 215.5H1021.5V717.5H297.5ZM398.5 215.5V241.5H297.5" />
        <path d="M280.5 216V199.5H298M1021 199.5H1037.5V216M1037.5 717V733.5H1021M298 733.5H280.5V717" strokeWidth="3" />
      </g>
      <Elevation />
      <Plan />
      <Section />
      <TitleBlock />
    </svg>
  );
}

function SheetTab({ label, active }: { label: string; active?: boolean }) {
  return (
    <button className={clsx("relative -ml-1 flex h-4 items-center justify-center", active ? "z-10 w-12 font-bold" : "w-[52px]")}>
      <svg viewBox="0 0 52 16" preserveAspectRatio="none" className="absolute inset-0 h-full w-full" aria-hidden="true">
        <path d="M0 0 8 15.5H43L51 0" fill={active ? "#fff" : "#e9e9e9"} stroke="#999" />
      </svg>
      <span className={clsx("relative leading-4", active ? "text-[14px]" : "text-[13px]")}>{label}</span>
    </button>
  );
}

function SheetBar() {
  return (
    <div className="flex h-[17px] items-start border-t border-[#666] bg-[#e6e6e6] text-[#444]">
      <div className="flex h-4 w-[69px] items-center gap-2 pl-[2px] pt-[2px]">
        <button aria-label="第一页"><Icon w={8} h={7}><path d="M2 0V7" /><path d="M7 0V7L3.5 3.5Z" fill="#666" stroke="none" /></Icon></button>
        <button aria-label="上一页"><Icon w={8} h={7}><path d="M6 0V7L2.5 3.5Z" fill="#666" stroke="none" /></Icon></button>
        <button aria-label="下一页"><Icon w={8} h={7}><path d="M3 0V7L6.5 3.5Z" fill="#666" stroke="none" /></Icon></button>
        <button aria-label="最后一页"><Icon w={8} h={7}><path d="M7 0V7" /><path d="M1 0V7L4.5 3.5Z" fill="#666" stroke="none" /></Icon></button>
      </div>
      <SheetTab label="模型" active />
      <SheetTab label="布局1" />
      <SheetTab label="布局2" />
    </div>
  );
}

export default function App() {
  return (
    <div className="relative flex min-h-screen flex-col overflow-hidden bg-[#e6e6e6] font-[family-name:'Open_Sans','Noto_Sans_CJK_SC',sans-serif]">
      <header className="flex h-[13px] items-end overflow-hidden border-b border-[#d5dbe4] bg-[#2b579a] pb-1 text-[13px] leading-5 text-white">
        {menus.map((m) => (
          <button key={m.label} className={clsx("whitespace-nowrap", m.cls)}>{m.label}</button>
        ))}
        <span className="ml-9 flex items-center gap-4 text-[#c3d0e4]">
          <Icon w={8} h={18}><path d="M4 4C0 4 0 8 2 11V13H6V11C8 8 8 4 4 4ZM2.5 15.5H5.5" fill="#c3d0e4" stroke="#c3d0e4" /></Icon>
          功能搜索...
        </span>
      </header>
      <Ribbon />
      <div className="flex flex-1 items-stretch">
        <Side />
        <main className="flex min-w-0 flex-1 flex-col">
          <DocTabs />
          <div className="flex-1 bg-black"><Canvas /></div>
          <SheetBar />
        </main>
      </div>
      <div className="h-[6px] bg-[#cccccc]" />
      <footer className="h-4 bg-[#e6e6e6]" />
      <p className="absolute bottom-2 right-[14px] font-[family-name:'Liberation_Sans',sans-serif] text-[18px] leading-6 text-[#999] [text-shadow:-1px_-1px_0_#f4f4f4]">
        CSDN @biyezuopinvip
      </p>
    </div>
  );
}
